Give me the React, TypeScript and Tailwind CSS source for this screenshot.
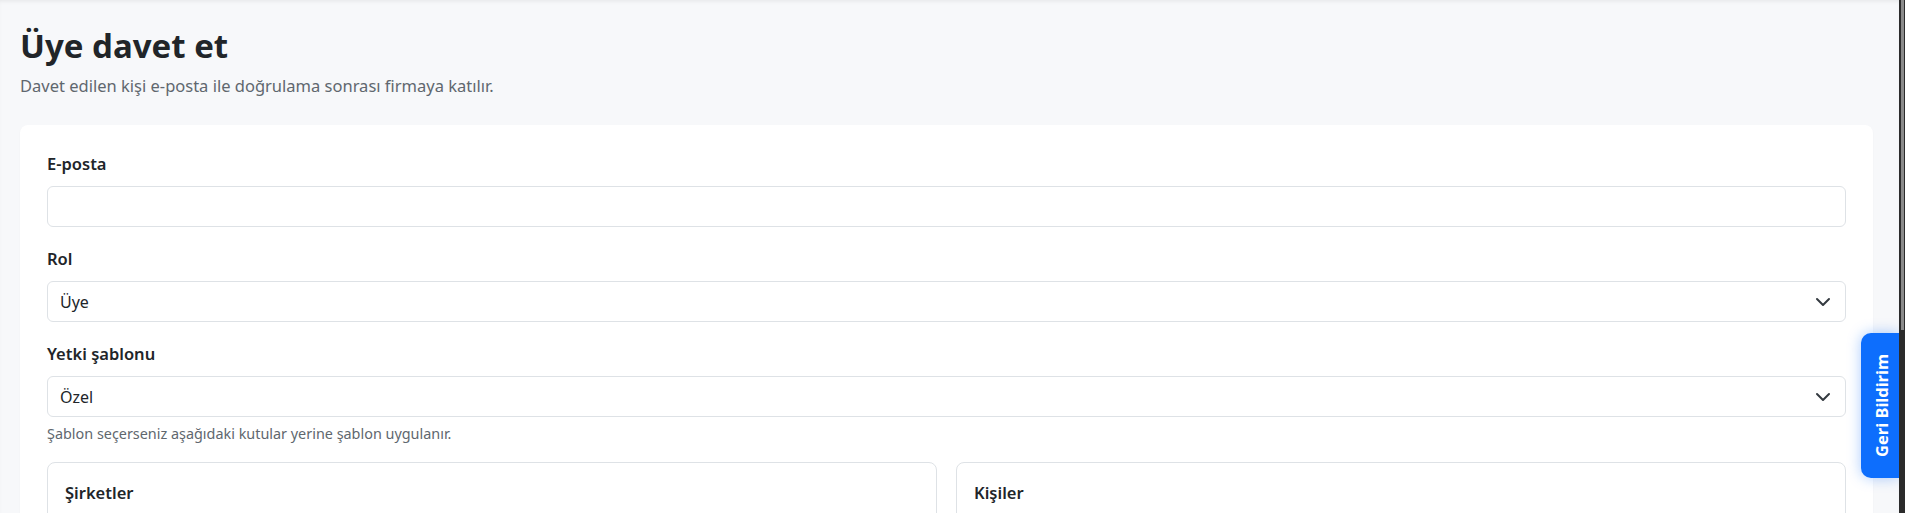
import React from "react";

const font = { fontFamily: '"Noto Sans", "Open Sans", sans-serif' };

function Chevron() {
  return (
    <svg width="16" height="16" viewBox="0 0 16 16" fill="none" className="shrink-0">
      <path d="m2 5 6 6 6-6" stroke="#343a40" strokeWidth="2" strokeLinecap="round" strokeLinejoin="round" />
    </svg>
  );
}

function Label({ children }: { children: React.ReactNode }) {
  return <div className="text-[16.5px] leading-[24px] font-semibold text-[#212529] mb-[10px]">{children}</div>;
}

function Select({ value }: { value: string }) {
  return (
    <div className="h-[41px] rounded-[6px] border border-[#dee2e6] bg-white flex items-center justify-between pl-3 pr-[14px] text-[16px] text-[#212529]">
      <span>{value}</span>
      <Chevron />
    </div>
  );
}

export default function App() {
  return (
    <div className="h-[513px] w-full overflow-hidden flex" style={font}>
      <div className="relative flex-1 h-full bg-[#f7f8fa] pl-5 pr-[26px] pt-[25px] shadow-[inset_0_3px_4px_-2px_rgba(0,0,0,0.08)]">
        <h1 className="text-[33px] leading-[41px] font-bold text-[#212529]">Üye davet et</h1>
        <p className="mt-2 text-[16.5px] leading-[24px] text-[#60676e]">
          Davet edilen kişi e-posta ile doğrulama sonrası firmaya katılır.
        </p>
        <div className="mt-[27px] bg-white rounded-[8px] shadow-[0_1px_2px_rgba(0,0,0,0.04)] px-[27px] pt-[27px] pb-6">
          <div>
            <Label>E-posta</Label>
            <div className="h-[41px] rounded-[6px] border border-[#dee2e6] bg-white" />
          </div>
          <div className="mt-5">
            <Label>Rol</Label>
            <Select value="Üye" />
          </div>
          <div className="mt-5">
            <Label>Yetki şablonu</Label>
            <Select value="Özel" />
            <div className="mt-[6px] text-[14.4px] leading-[21px] text-[#60676e]">
              Şablon seçerseniz aşağıdaki kutular yerine şablon uygulanır.
            </div>
          </div>
          <div className="mt-[18px] grid grid-cols-2 gap-[19px]">
            <div className="h-[200px] rounded-[8px] border border-[#dee2e6] px-[17px] pt-[18px]">
              <div className="text-[16.5px] leading-[24px] font-semibold text-[#212529]">Şirketler</div>
            </div>
            <div className="h-[200px] rounded-[8px] border border-[#dee2e6] px-[17px] pt-[18px]">
              <div className="text-[16.5px] leading-[24px] font-semibold text-[#212529]">Kişiler</div>
            </div>
          </div>
        </div>
        <button className="absolute right-0 top-[333px] w-[38px] h-[145px] rounded-l-[10px] bg-[#0d6efd] shadow-[0_0_14px_rgba(13,110,253,0.35)] flex items-center justify-center pl-[4px]">
          <span className="text-white font-bold text-[16.5px] whitespace-nowrap [writing-mode:vertical-rl] rotate-180">
            Geri Bildirim
          </span>
        </button>
      </div>
      <div className="w-[6px] h-full bg-[#2b2b2b] relative">
        <div className="absolute left-[2px] top-0 w-[3px] h-[330px] bg-[#8a8a8a]" />
      </div>
    </div>
  );
}
